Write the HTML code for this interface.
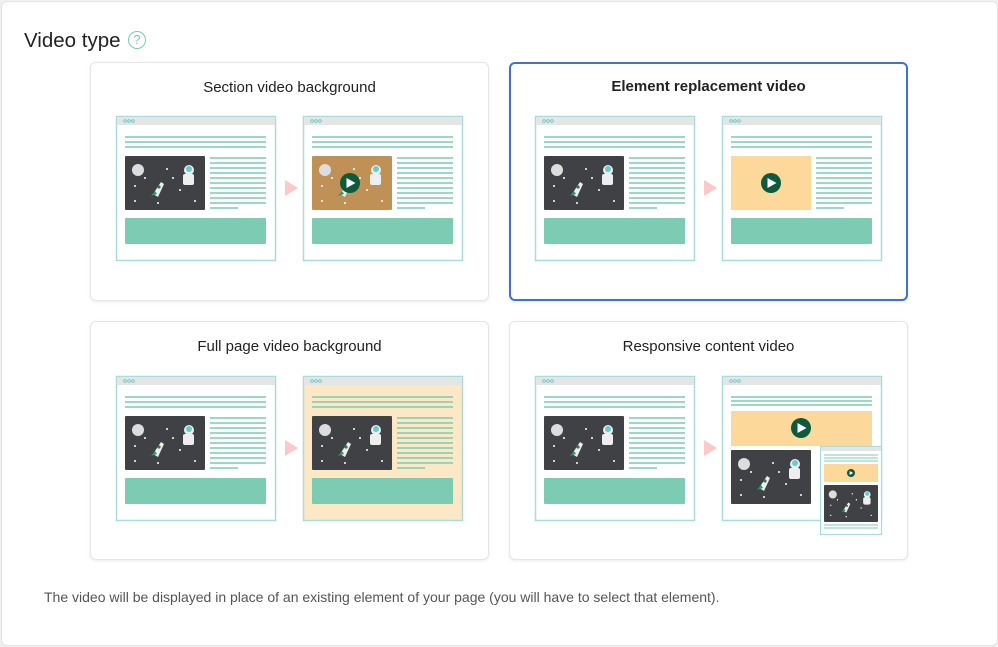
<!DOCTYPE html>
<html><head><meta charset="utf-8"><style>
body{margin:0;width:998px;height:647px;background:#f0f0f0;font-family:"Liberation Sans",sans-serif;position:relative;overflow:hidden}
.panel{position:absolute;left:1px;top:1px;width:995px;height:643px;background:#fff;border:1px solid #e3e3e3;border-radius:6px}
h1{position:absolute;left:24px;top:29px;margin:0;font-size:20.5px;font-weight:normal;color:#222}
.q{position:absolute;left:128px;top:31px;width:16px;height:16px;border:1.5px solid #7cc9b4;border-radius:50%;color:#7cc9b4;font-size:13px;text-align:center;line-height:16px}
.card{position:absolute;width:397px;height:237px;border:1px solid #e6e6e6;border-radius:6px;box-shadow:0 1px 3px rgba(0,0,0,.08);background:#fff}
.card.sel{border:2px solid #3d72d0;width:395px;height:235px}
.t{position:absolute;left:0;right:0;top:16px;text-align:center;font-size:15px;color:#222}
.sel .t{font-weight:bold;top:14px;font-size:15px}
.card svg{position:absolute;left:0;top:0}
.foot{position:absolute;left:44px;top:589px;font-size:14px;color:#555}
</style></head><body>
<div class="panel"></div>
<h1>Video type</h1><div class="q">?</div>
<div class="card" style="left:90px;top:62px"><div class="t">Section video background</div><svg id="c1" width="397" height="237"></svg></div>
<div class="card sel" style="left:509px;top:62px"><div class="t">Element replacement video</div><svg id="c2" width="397" height="237" style="left:-1px;top:-1px"></svg></div>
<div class="card" style="left:90px;top:321px"><div class="t">Full page video background</div><svg id="c3" width="397" height="237"></svg></div>
<div class="card" style="left:509px;top:321px"><div class="t">Responsive content video</div><svg id="c4" width="397" height="237"></svg></div>
<div class="foot">The video will be displayed in place of an existing element of your page (you will have to select that element).</div>
<script>
const G="#7ccbb2",T="#a9dcdc";
function space(x,y,w,h,fill){
 let s=`<rect x="${x}" y="${y}" width="${w}" height="${h}" rx="1" fill="${fill||'#3f4144'}"/>`;
 const k=w/80;
 s+=`<circle cx="${x+13*k}" cy="${y+14*k}" r="${6*k}" fill="#ddd"/>`;
 s+=`<path d="M${x+28*k} ${y+38*k} l${8*k} -${12*k} l${3*k} ${2*k} l-${6*k} ${13*k}z" fill="#eee"/><circle cx="${x+34*k}" cy="${y+31*k}" r="${1.6*k}" fill="#2a7a55"/><path d="M${x+26*k} ${y+40*k} l${4*k} -${5*k} l${2*k} ${3*k}z" fill="#2a9a6a"/>`;
 s+=`<circle cx="${x+64*k}" cy="${y+14*k}" r="${5*k}" fill="#eee"/><circle cx="${x+64*k}" cy="${y+13*k}" r="${3*k}" fill="#6cc"/><rect x="${x+58*k}" y="${y+18*k}" width="${11*k}" height="${11*k}" rx="2" fill="#eee"/>`;
 [[20,22],[10,30],[48,22],[55,34],[33,47],[10,45],[70,45],[42,13]].forEach(p=>s+=`<circle cx="${x+p[0]*k}" cy="${y+p[1]*k}" r="${1*k}" fill="#fff"/>`);
 return s;
}
function play(cx,cy,r){return `<circle cx="${cx}" cy="${cy}" r="${r}" fill="#0d5a3c"/><path d="M${cx-r*0.35} ${cy-r*0.5} L${cx+r*0.55} ${cy} L${cx-r*0.35} ${cy+r*0.5}z" fill="#fff"/>`}
function browser(x,y,opt){
 opt=opt||{};
 let s=`<rect x="${x+0.5}" y="${y+0.5}" width="159" height="144" fill="${opt.bg||'#fff'}" stroke="${T}" stroke-width="1.5"/><rect x="${x+1}" y="${y+1}" width="158" height="8" fill="#e4e6e6"/>`;
 for(let i=0;i<3;i++)s+=`<circle cx="${x+9+i*4}" cy="${y+5}" r="1.3" fill="none" stroke="#5bb" stroke-width=".7"/>`;
 const ln=(x1,y1,x2)=>`<line x1="${x1}" y1="${y1}" x2="${x2}" y2="${y1}" stroke="${G}" stroke-width="1.4"/>`;
 if(opt.resp){
  s+=ln(x+9,y+21,x+150)+ln(x+9,y+25,x+150)+ln(x+9,y+29,x+150);
  s+=`<rect x="${x+9}" y="${y+35}" width="141" height="35" fill="#fdd89b"/>`+play(x+79,y+52,10);
  s+=space(x+9,y+74,80,54);
  return s;
 }
 s+=ln(x+9,y+21,x+150)+ln(x+9,y+26,x+150)+ln(x+9,y+31,x+150);
 for(let i=0;i<11;i++)s+=ln(x+94,y+42+i*5,i==10?x+122:x+150);
 if(opt.img=="orange")s+=`<rect x="${x+9}" y="${y+40}" width="80" height="54" fill="#fdd89b"/>`+play(x+49,y+67,10);
 else if(opt.img=="brown")s+=space(x+9,y+40,80,54,"#bf9156")+play(x+47,y+67,10);
 else s+=space(x+9,y+40,80,54);
 s+=`<rect x="${x+9}" y="${y+102}" width="141" height="26" rx="1" fill="${G}"/>`;
 return s;
}
const arrow=(x,y)=>`<path d="M${x} ${y-8} L${x+13} ${y} L${x} ${y+8}z" fill="#fcc8c8"/>`;
document.getElementById('c1').innerHTML=browser(25,53)+arrow(194,125)+browser(212,53,{img:"brown"});
document.getElementById('c2').innerHTML=browser(25,53)+arrow(194,125)+browser(212,53,{img:"orange"});
document.getElementById('c3').innerHTML=browser(25,54)+arrow(194,126)+browser(212,54,{bg:"#fde8c6"});
let ph=`<rect x="310.5" y="124.5" width="61" height="88" fill="#fff" stroke="${T}" stroke-width="1.2"/><rect x="311" y="125" width="60" height="4" fill="#e4e6e6"/>`;
[133,136,139].forEach(y=>ph+=`<line x1="314" y1="${y}" x2="368" y2="${y}" stroke="${G}"/>`);
ph+=`<rect x="314" y="142" width="54" height="18" fill="#fdd89b"/>`+play(341,151,4)+space(314,163,54,37);
[203,206].forEach(y=>ph+=`<line x1="314" y1="${y}" x2="368" y2="${y}" stroke="${G}"/>`);
document.getElementById('c4').innerHTML=browser(25,54)+arrow(194,126)+browser(212,54,{resp:1})+ph;
</script>
</body></html>
